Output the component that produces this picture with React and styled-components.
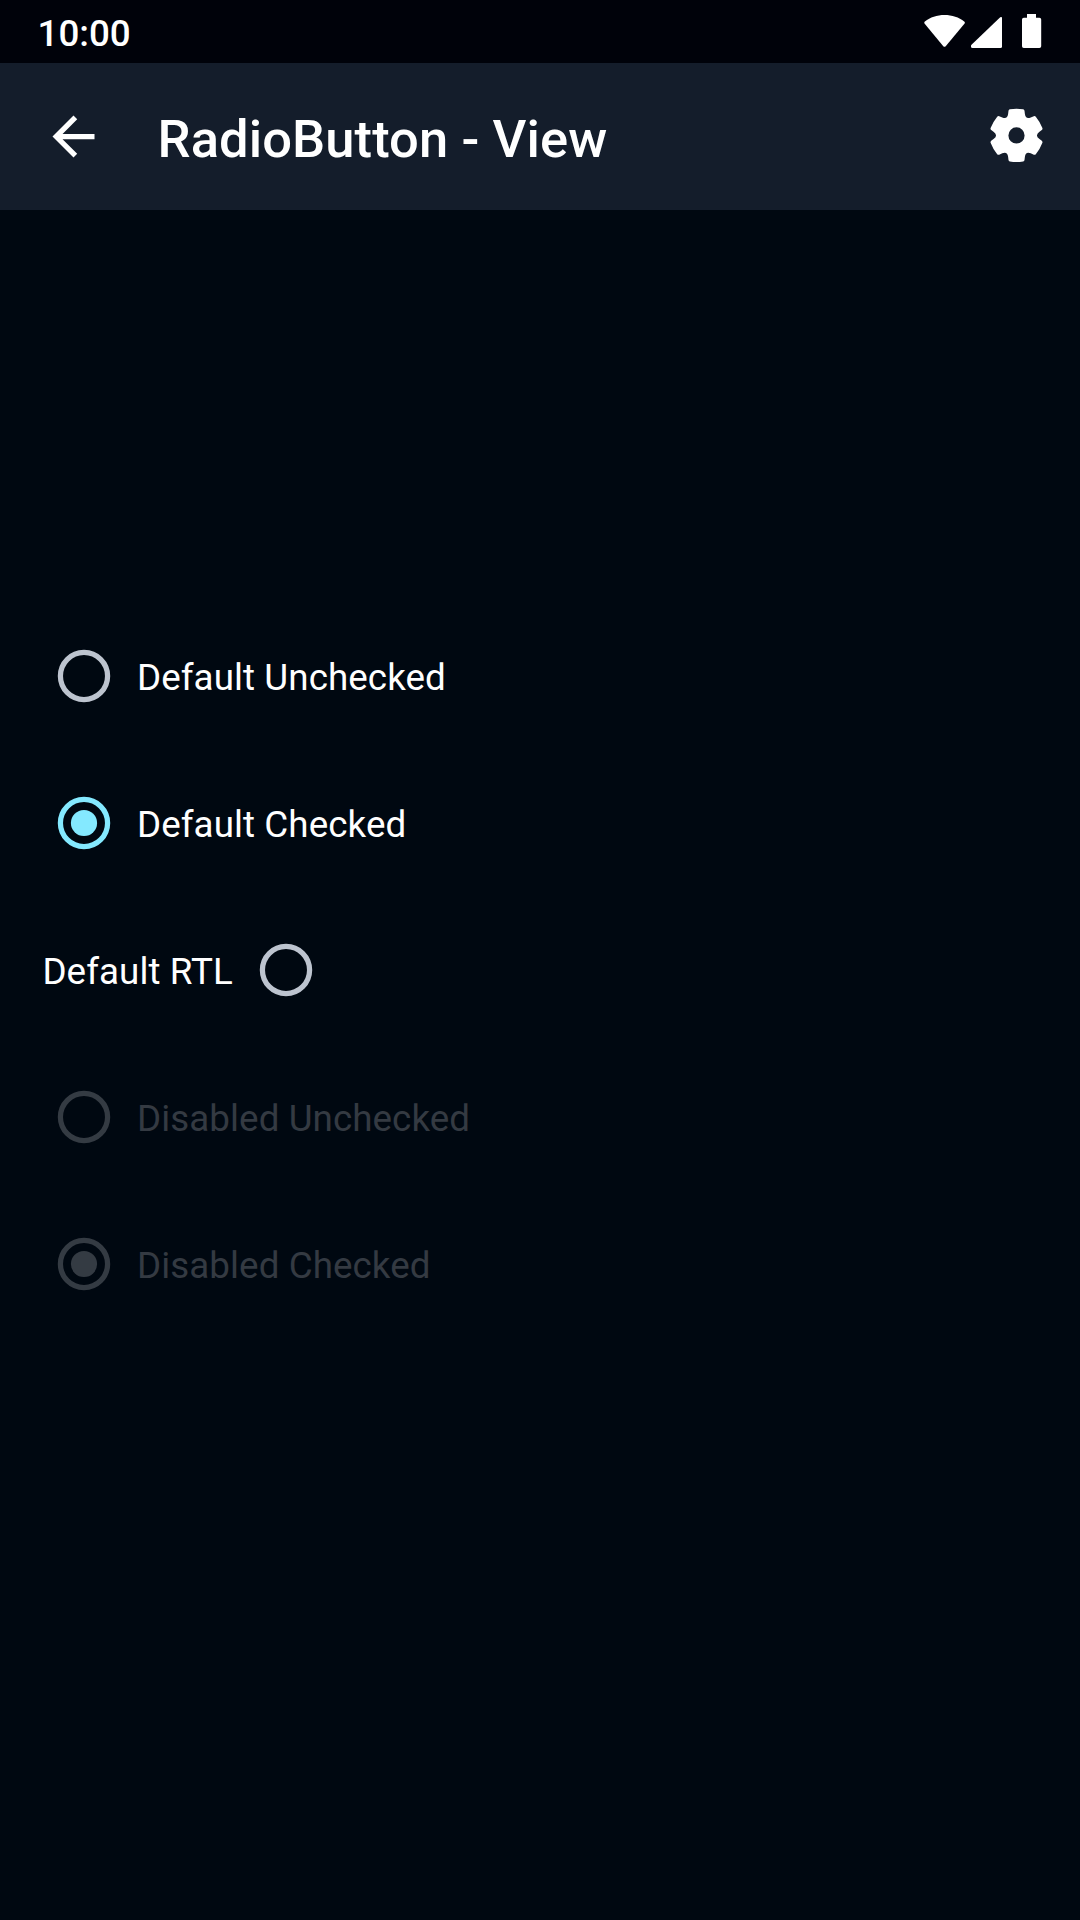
import React from "react";
import styled, { createGlobalStyle } from "styled-components";

const GlobalStyle = createGlobalStyle`
  * { box-sizing: border-box; }
  html, body { margin: 0; background: #000811; }
`;

const Screen = styled.div`
  display: flex;
  flex-direction: column;
  width: 1080px;
  height: 1920px;
  overflow: hidden;
  background: #000811;
  color: #ffffff;
  font-family: Roboto, "Liberation Sans", sans-serif;
`;

const StatusBar = styled.header`
  display: flex;
  flex: none;
  align-items: center;
  justify-content: space-between;
  height: 63px;
  padding: 0 38px 0 37.5px;
  background: #00020a;
`;

const Clock = styled.span`
  padding-top: 3px;
  font-size: 36.75px;
  font-weight: 500;
  line-height: 43px;
`;

const StatusIcons = styled.svg`
  display: block;
  width: 118px;
  height: 63px;
  fill: #ffffff;
`;

const AppBar = styled.nav`
  display: flex;
  flex: none;
  align-items: center;
  height: 147px;
  padding: 0 32px 0 42px;
  background: #141d2b;
`;

const IconButton = styled.button`
  display: flex;
  flex: none;
  width: 63px;
  height: 63px;
  padding: 0;
  border: 0;
  background: none;
  color: inherit;

  svg {
    width: 63px;
    height: 63px;
    fill: currentColor;
  }
`;

const Title = styled.h1`
  flex: 1;
  margin: 0;
  padding: 5px 0 0 52.5px;
  font-size: 52.5px;
  font-weight: 500;
  line-height: 62px;
  letter-spacing: 0.09px;
`;

const Options = styled.main`
  display: flex;
  flex-direction: column;
  align-items: flex-start;
  padding: 392px 42px 0;
`;

const Option = styled.label`
  display: flex;
  flex-direction: ${(p) => (p.$reversed ? "row-reverse" : "row")};
  align-items: center;
  height: 147px;
  color: ${(p) => (p.$disabled ? "#343a42" : "#ffffff")};
`;

const RadioBox = styled.span`
  display: flex;
  align-items: center;
  justify-content: center;
  width: 84px;
  height: 84px;

  svg {
    width: 84px;
    height: 84px;
    color: ${(p) => p.$tone};
  }
`;

const OptionText = styled.span`
  padding: ${(p) => (p.$reversed ? "3px 11px 0 0.4px" : "3px 0 0 11px")};
  font-size: 36.75px;
  line-height: 43px;
  letter-spacing: 0.08px;
  white-space: nowrap;
`;

const turn = ([x, y], deg) => {
  const a = (deg * Math.PI) / 180;
  const c = Math.cos(a);
  const s = Math.sin(a);
  return `${(x * c - y * s).toFixed(2)} ${(x * s + y * c).toFixed(2)}`;
};

const tooth = (deg) => {
  const p = (x, y) => turn([x, y], deg);
  return [
    `L${p(-8.4, -21.3)}`,
    `L${p(-8, -24.6)}`,
    `Q${p(-7.8, -25.8)} ${p(-6.6, -26.1)}`,
    `Q${p(0, -27.2)} ${p(6.6, -26.1)}`,
    `Q${p(7.8, -25.8)} ${p(8, -24.6)}`,
    `L${p(8.4, -21.3)}`,
    `Q${p(9.15, -15.85)} ${turn([-8.4, -21.3], deg + 60)}`,
  ].join("");
};

const gearPath =
  `M${turn([-8.4, -21.3], 0)}` +
  [0, 60, 120, 180, 240, 300].map(tooth).join("") +
  "ZM0 -8.1A8.1 8.1 0 1 0 0 8.1A8.1 8.1 0 1 0 0 -8.1Z";

const Radio = ({ checked, tone }) => (
  <RadioBox $tone={tone}>
    <svg viewBox="0 0 84 84">
      <circle cx="42" cy="42" r="23.6" fill="none" stroke="currentColor" strokeWidth="5.25" />
      {checked && <circle cx="42" cy="42" r="13.1" fill="currentColor" />}
    </svg>
  </RadioBox>
);

const options = [
  { text: "Default Unchecked" },
  { text: "Default Checked", checked: true },
  { text: "Default RTL", reversed: true },
  { text: "Disabled Unchecked", disabled: true },
  { text: "Disabled Checked", checked: true, disabled: true },
];

const toneOf = ({ checked, disabled }) =>
  disabled ? "#343b43" : checked ? "#84e9ff" : "#bdc4cf";

export default function App() {
  return (
    <Screen>
      <GlobalStyle />
      <StatusBar>
        <Clock>10:00</Clock>
        <StatusIcons viewBox="924 0 118 63">
          <path d="M944.5 15C952 15 959 17.3 964.2 21.4Q965.4 22.5 964.4 23.8L945.7 46.2Q944.5 47.4 943.3 46.2L924.7 23.8Q923.7 22.5 924.9 21.4C930.1 17.3 937 15 944.5 15Z" />
          <path d="M1000.2 17.3Q1002 16.3 1002 18V46.5Q1002 48 1000.5 48H972.5Q971 48 971 46.5V45.8Q971 45.2 971.5 44.7Z" />
          <path d="M1027 14H1036V17.7H1039.4Q1041.2 17.7 1041.2 19.5V46.2Q1041.2 48 1039.4 48H1023.8Q1022 48 1022 46.2V19.5Q1022 17.7 1023.8 17.7H1027Z" />
        </StatusIcons>
      </StatusBar>
      <AppBar>
        <IconButton aria-label="Back">
          <svg viewBox="0 0 24 24">
            <path d="M20 11H7.83l5.59-5.59L12 4l-8 8 8 8 1.41-1.41L7.83 13H20v-2z" />
          </svg>
        </IconButton>
        <Title>RadioButton - View</Title>
        <IconButton aria-label="Settings">
          <svg viewBox="-31.5 -30.4 63 63">
            <path fillRule="evenodd" d={gearPath} />
          </svg>
        </IconButton>
      </AppBar>
      <Options>
        {options.map((o) => (
          <Option key={o.text} $reversed={o.reversed} $disabled={o.disabled}>
            <Radio checked={o.checked} tone={toneOf(o)} />
            <OptionText $reversed={o.reversed}>{o.text}</OptionText>
          </Option>
        ))}
      </Options>
    </Screen>
  );
}
